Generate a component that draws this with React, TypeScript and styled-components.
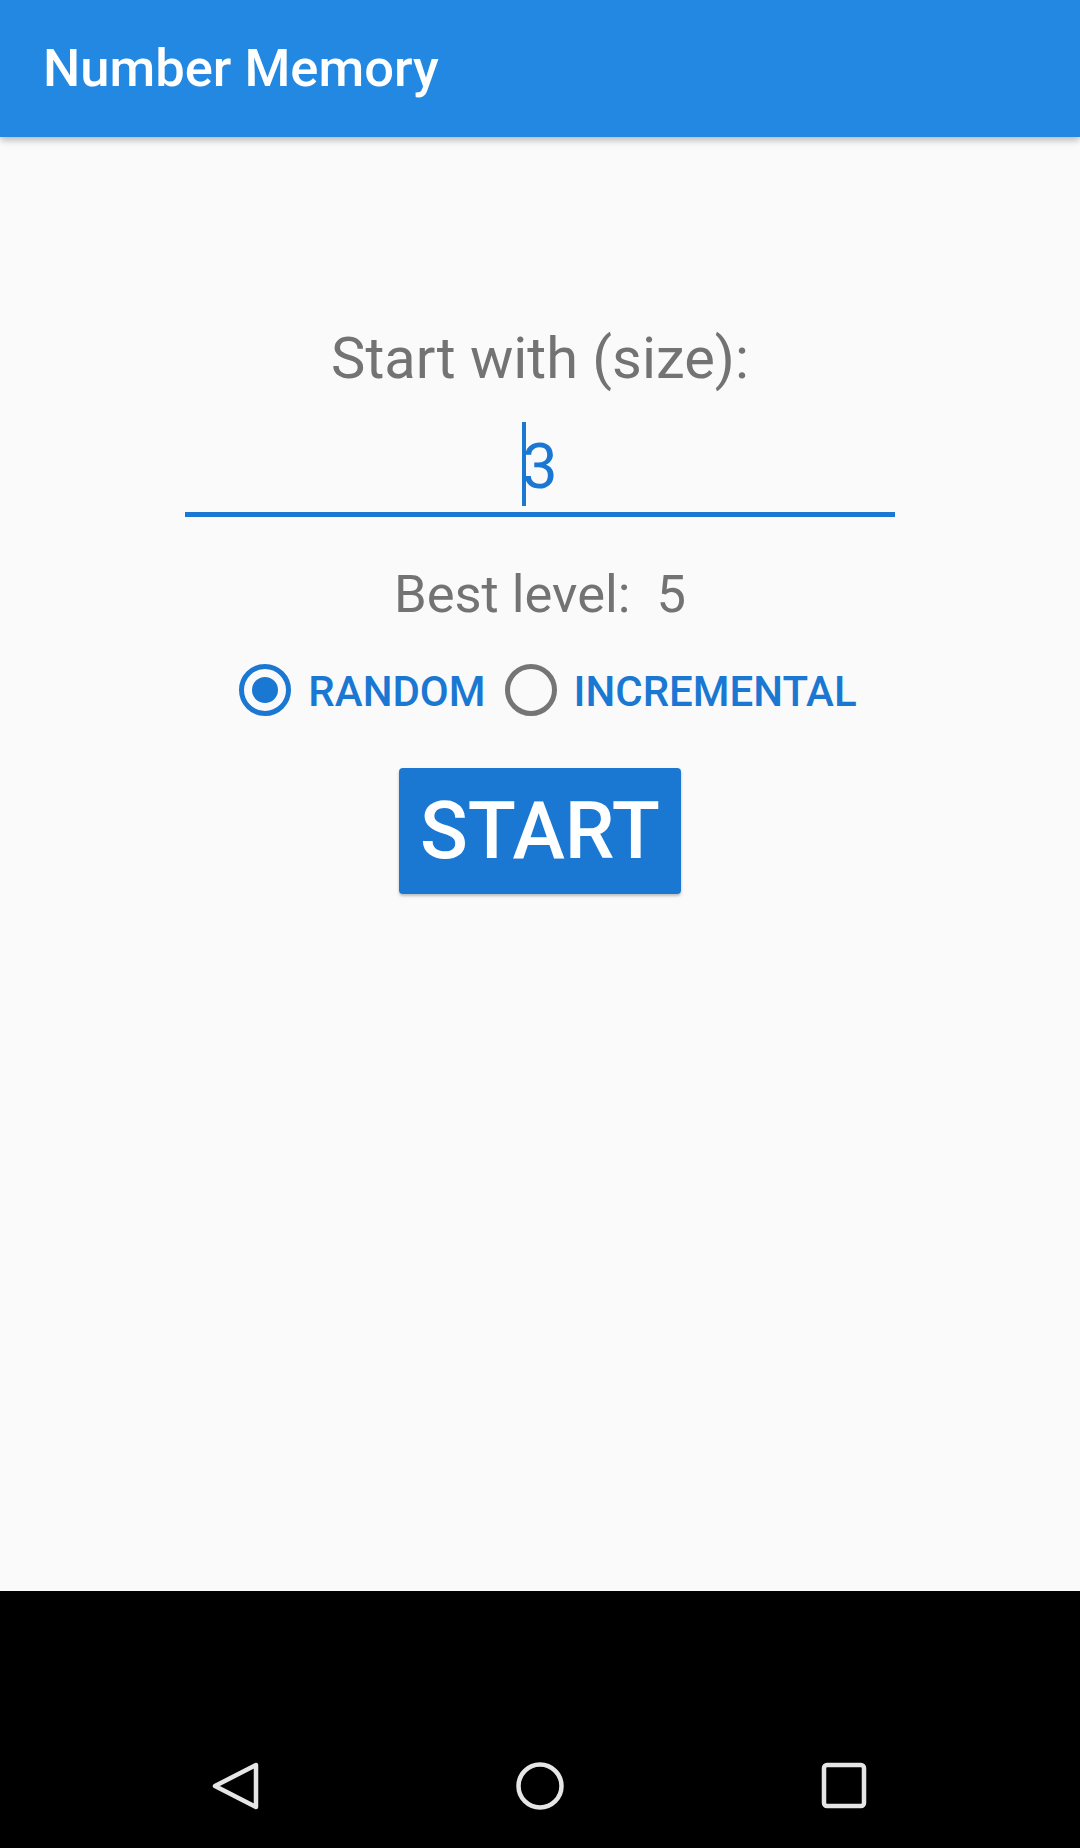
import React from "react";
import styled, { createGlobalStyle } from "styled-components";

const GlobalStyle = createGlobalStyle`
  html, body { margin: 0; padding: 0; background: #000; }
  body { font-family: Roboto, "Noto Sans", "Liberation Sans", sans-serif; }
  * { box-sizing: border-box; }
`;

const Screen = styled.div`
  width: 1080px;
  height: 1848px;
  display: flex;
  flex-direction: column;
  background: #fafafa;
  overflow: hidden;
`;

const AppBar = styled.header`
  position: relative;
  z-index: 1;
  height: 137px;
  flex: none;
  display: flex;
  align-items: center;
  padding-left: 43px;
  background: #2288e2;
  box-shadow: 0 3px 7px rgba(0, 0, 0, 0.28);
`;

const Title = styled.h1`
  margin: 0;
  font-size: 52.5px;
  line-height: 1;
  font-weight: 500;
  color: #ffffff;
`;

const Content = styled.main`
  flex: 1;
  display: flex;
  flex-direction: column;
  align-items: center;
  padding-top: 193px;
  background: #fafafa;
`;

const Label = styled.div<{ $size: number; $mt?: number }>`
  font-size: ${(p) => p.$size}px;
  line-height: 1;
  color: #737373;
  white-space: pre;
  margin-top: ${(p) => p.$mt ?? 0}px;
`;

const Field = styled.div`
  width: 710px;
  margin-top: 47px;
  display: flex;
  justify-content: center;
  padding-bottom: 14px;
  border-bottom: 5px solid #1a78d3;
`;

const FieldText = styled.span`
  position: relative;
  font-size: 63px;
  line-height: 1;
  color: #1a78d3;
`;

const Caret = styled.span`
  position: absolute;
  left: 0px;
  top: -13px;
  width: 4px;
  height: 84px;
  background: #1a78d3;
`;

const RadioRow = styled.div`
  display: flex;
  align-items: center;
  margin-top: 44px;
  margin-left: 16px;
  height: 52px;
`;

const RadioOption = styled.label`
  display: flex;
  align-items: center;
  gap: 17px;
  margin-right: 19px;
  &:last-child { margin-right: 0; }
`;

const RadioCircle = styled.span<{ $checked: boolean }>`
  width: 52px;
  height: 52px;
  border-radius: 50%;
  border: 5px solid ${(p) => (p.$checked ? "#1a78d3" : "#757575")};
  display: flex;
  align-items: center;
  justify-content: center;
  &::after {
    content: "";
    width: 26px;
    height: 26px;
    border-radius: 50%;
    background: #1a78d3;
    display: ${(p) => (p.$checked ? "block" : "none")};
  }
`;

const RadioText = styled.span`
  font-size: 42px;
  line-height: 1;
  font-weight: 500;
  color: #1a78d3;
  padding-top: 4px;
`;

const StartButton = styled.button`
  margin-top: 52px;
  height: 126px;
  padding: 0 21px;
  border: none;
  border-radius: 4px;
  background: #1a78d3;
  color: #ffffff;
  font-family: inherit;
  font-size: 79px;
  font-weight: 500;
  line-height: 1;
  box-shadow: 0 2px 3px rgba(0, 0, 0, 0.25);
`;

const NavBar = styled.nav`
  height: 257px;
  flex: none;
  background: #000;
  display: flex;
  justify-content: center;
  align-items: flex-start;
  gap: 256px;
  padding-top: 171px;
`;

const NavIcon = styled.svg`
  width: 48px;
  height: 48px;
  display: block;
`;

export default function App() {
  return (
    <>
      <GlobalStyle />
      <Screen>
        <AppBar>
          <Title>Number Memory</Title>
        </AppBar>
        <Content>
          <Label $size={57.75}>Start with (size):</Label>
          <Field>
            <FieldText>
              <Caret />3
            </FieldText>
          </Field>
          <Label $size={52.5} $mt={51}>Best level:  5</Label>
          <RadioRow>
            <RadioOption>
              <RadioCircle $checked={true} />
              <RadioText>RANDOM</RadioText>
            </RadioOption>
            <RadioOption>
              <RadioCircle $checked={false} />
              <RadioText>INCREMENTAL</RadioText>
            </RadioOption>
          </RadioRow>
          <StartButton>START</StartButton>
        </Content>
        <NavBar>
          <NavIcon viewBox="0 0 48 48">
            <path d="M3 24 L44 3 L44 45 Z" fill="none" stroke="#e6e6e6" strokeWidth="4.5" strokeLinejoin="round" />
          </NavIcon>
          <NavIcon viewBox="0 0 48 48">
            <circle cx="24" cy="24" r="21.5" fill="none" stroke="#e6e6e6" strokeWidth="4.5" />
          </NavIcon>
          <NavIcon viewBox="0 0 48 48">
            <rect x="4" y="3" width="40" height="41" rx="3" fill="none" stroke="#e6e6e6" strokeWidth="4.5" />
          </NavIcon>
        </NavBar>
      </Screen>
    </>
  );
}
